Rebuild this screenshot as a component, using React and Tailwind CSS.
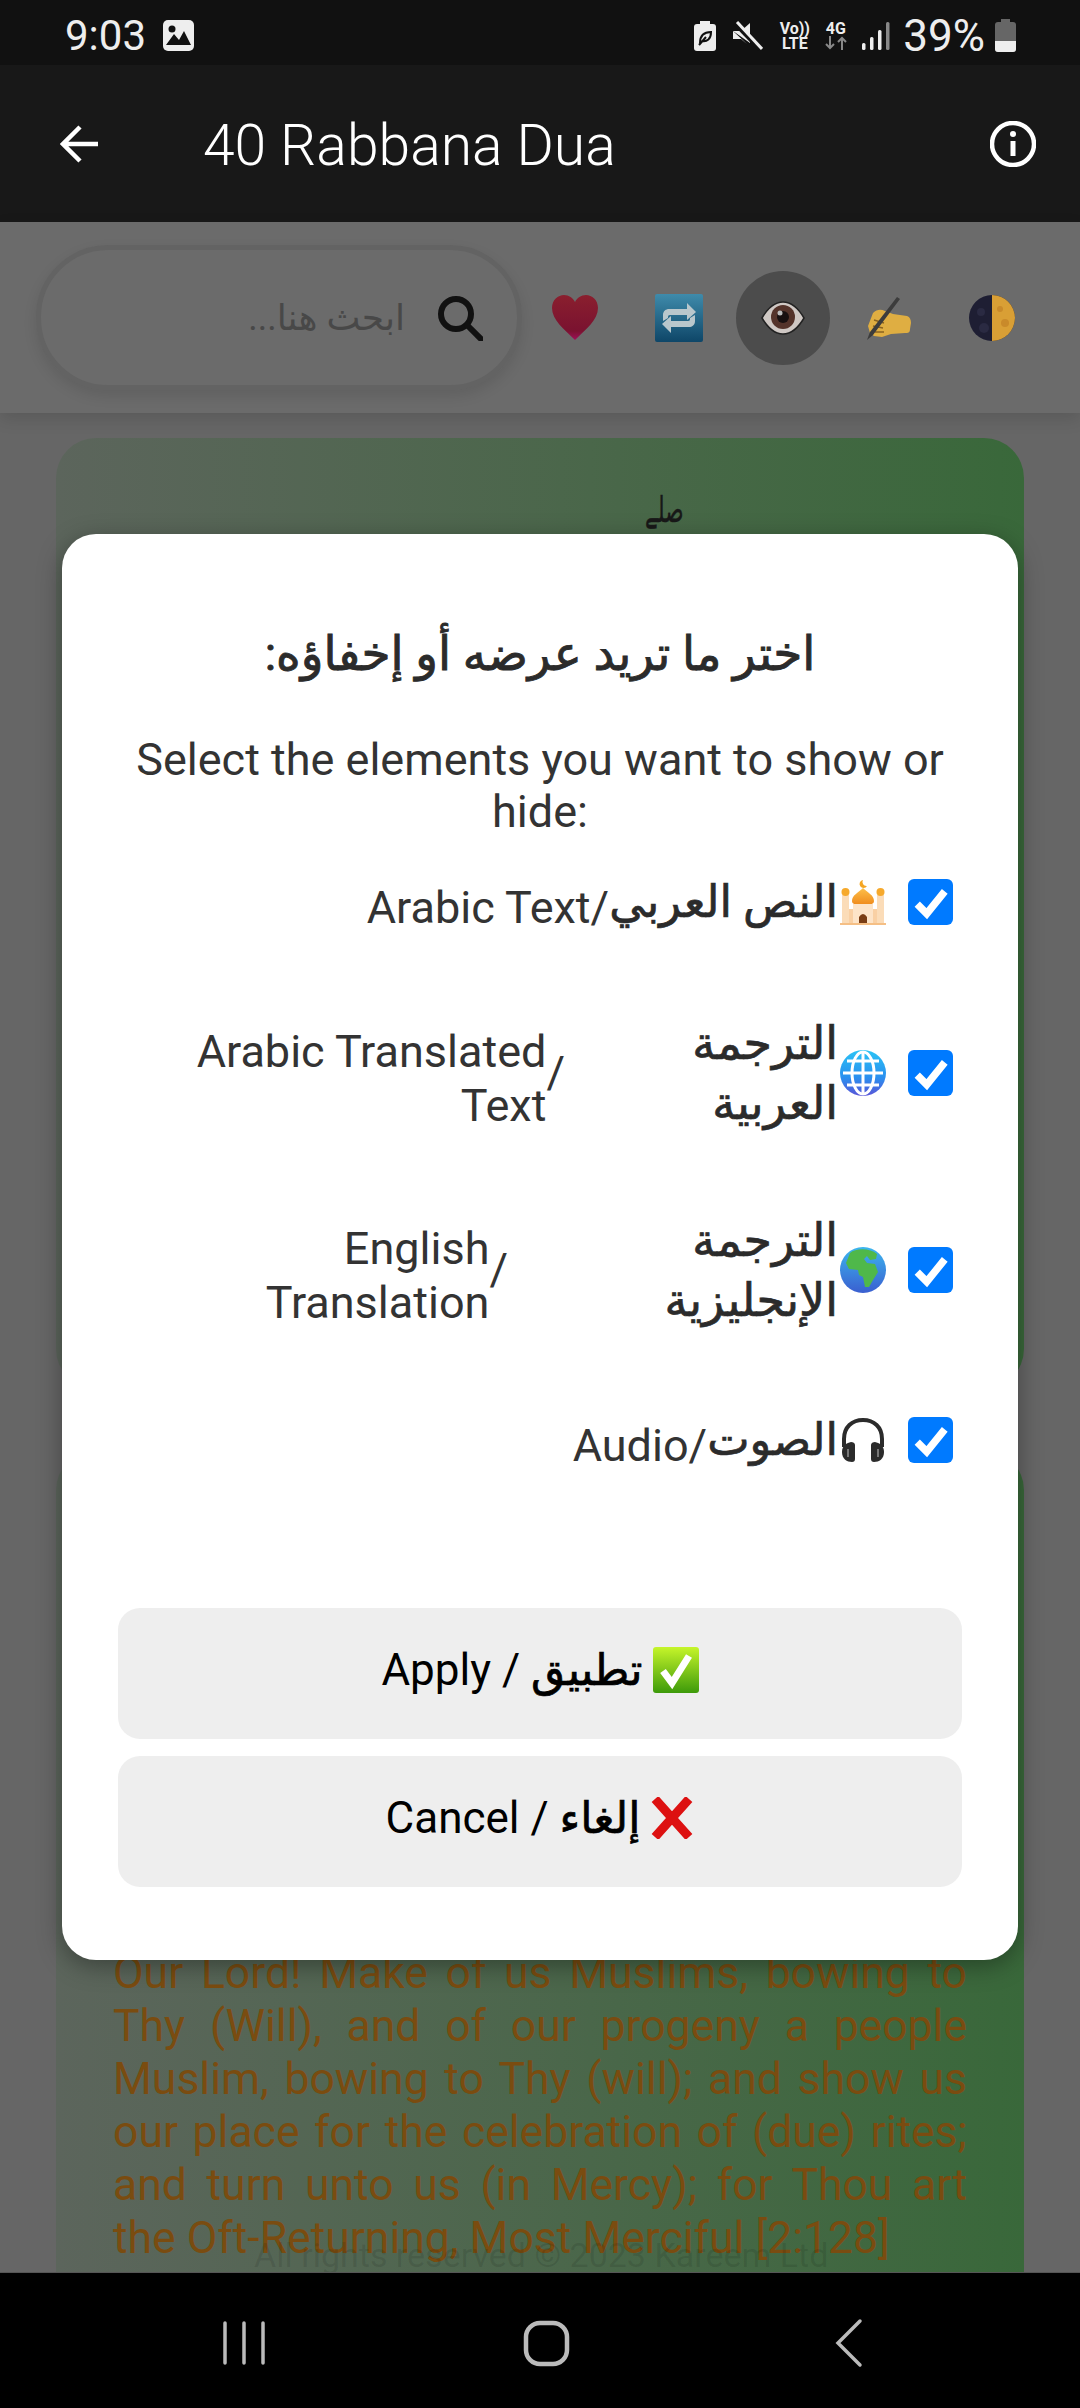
import React from "react";

const latin = "font-['Roboto',sans-serif]";
const arFont = "font-['Roboto','DejaVu_Sans',sans-serif]";
const arMedium = arFont + " [-webkit-text-stroke:0.7px_#2b2b2b]";

function Check() {
  return (
    <div className="w-[45px] h-[46px] rounded-[6px] bg-[#007aff] flex items-center justify-center shrink-0">
      <svg width="36" height="36" viewBox="0 0 34 34"><path d="M4 19 L13 28 L30 7" fill="none" stroke="#fff" strokeWidth="7" /></svg>
    </div>
  );
}

function Mosque() {
  return (
    <svg width="46" height="46" viewBox="0 0 46 46" className="shrink-0">
      <defs>
        <linearGradient id="dome" x1="0" y1="0" x2="0" y2="1"><stop offset="0" stopColor="#fdc04a" /><stop offset="1" stopColor="#ef8a1c" /></linearGradient>
      </defs>
      <path d="M23 1 a4 4 0 1 0 4 6 a4 4 0 0 1 -4 -6z" fill="#f5a623" />
      <path d="M23 9 C18 14 12 16 12 22 C12 25 15 26 23 26 C31 26 34 25 34 22 C34 16 28 14 23 9z" fill="url(#dome)" />
      <rect x="2" y="16" width="7" height="29" fill="#fbdcb8" />
      <rect x="37" y="16" width="7" height="29" fill="#fbdcb8" />
      <circle cx="5.5" cy="13" r="4" fill="#f6a92c" />
      <circle cx="40.5" cy="13" r="4" fill="#f6a92c" />
      <rect x="9" y="30" width="28" height="15" fill="#f9d0a4" />
      <rect x="13" y="25" width="20" height="20" fill="#fde4c8" />
      <path d="M19 45 V38 Q23 32 27 38 V45z" fill="#7a3d14" />
      <rect x="0" y="44" width="46" height="2" fill="#f5bf85" />
    </svg>
  );
}

function WebGlobe() {
  return (
    <svg width="46" height="46" viewBox="0 0 46 46" className="shrink-0">
      <defs>
        <linearGradient id="web" x1="0" y1="0" x2="0" y2="1"><stop offset="0" stopColor="#2bc4f5" /><stop offset="0.6" stopColor="#2a8fef" /><stop offset="1" stopColor="#5a55d8" /></linearGradient>
      </defs>
      <circle cx="23" cy="23" r="23" fill="url(#web)" />
      <g fill="none" stroke="#fff" strokeWidth="3">
        <ellipse cx="23" cy="23" rx="11" ry="21" />
        <path d="M23 2 V44 M3 23 H43 M7 11 H39 M7 35 H39" />
      </g>
    </svg>
  );
}

function EarthGlobe() {
  return (
    <svg width="46" height="46" viewBox="0 0 46 46" className="shrink-0">
      <defs>
        <linearGradient id="sea" x1="0" y1="0" x2="0" y2="1"><stop offset="0" stopColor="#3cb6ef" /><stop offset="1" stopColor="#3a5fd0" /></linearGradient>
      </defs>
      <circle cx="23" cy="23" r="23" fill="url(#sea)" />
      <path d="M10 6 C16 1 30 1 37 7 L36 12 L30 13 L27 9 L24 12 L27 16 L35 17 L38 25 L33 33 L29 40 L25 40 L23 30 L19 28 L18 23 L9 22 L6 16z" fill="#4fb84a" />
    </svg>
  );
}

function Headphones() {
  return (
    <svg width="46" height="46" viewBox="0 0 46 46" className="shrink-0">
      <path d="M4 30 V22 C4 10 12 3 23 3 C34 3 42 10 42 22 V30" fill="none" stroke="#2b2b2b" strokeWidth="4" />
      <path d="M11 25 C7 26 2 28 2 35 C2 42 7 45 12 45 C14 45 15 44 15 42 V28 C15 26 13 25 11 25z" fill="#2b2b2b" />
      <path d="M35 25 C39 26 44 28 44 35 C44 42 39 45 34 45 C32 45 31 44 31 42 V28 C31 26 33 25 35 25z" fill="#2b2b2b" />
      <path d="M8 32 V40 M38 32 V40" stroke="#777" strokeWidth="2" />
    </svg>
  );
}

function Row({ className, emoji, children }) {
  return (
    <div className={"flex items-center justify-end pr-[9px] " + className}>
      {children}
      <div className="ml-[2px] w-[46px] flex items-center justify-center shrink-0">{emoji}</div>
      <div className="ml-[22px]"><Check /></div>
    </div>
  );
}

function Modal() {
  return (
    <div className="absolute left-[62px] top-[534px] w-[956px] h-[1426px] bg-white rounded-[34px] shadow-[0_6px_24px_rgba(0,0,0,0.35)] px-[56px] pt-[90px] flex flex-col">
      <div dir="rtl" className={arFont + " [-webkit-text-stroke:0.9px_#2b2b2b] text-center text-[#2b2b2b] text-[47px] leading-[60px] h-[60px]"}>اختر ما تريد عرضه أو إخفاؤه:</div>
      <div className={latin + " mt-[50px] text-center text-[#333] text-[45px] leading-[52px] mx-[-8px]"}>Select the elements you want to show or hide:</div>
      <Row className="mt-[34px] h-[60px]" emoji={<Mosque />}>
        <span className={latin + " text-[45px] text-[#333] leading-[60px] mt-[12px]"}>Arabic Text/</span>
        <span dir="rtl" className={arMedium + " text-[45px] text-[#2b2b2b] leading-[60px]"}>النص العربي</span>
      </Row>
      <Row className="mt-[81px] h-[120px]" emoji={<WebGlobe />}>
        <span className={latin + " w-[360px] text-right text-[45px] text-[#333] leading-[54px] mt-[12px]"}>Arabic Translated Text</span>
        <span className={latin + " text-[45px] text-[#333] leading-[54px]"}>/</span>
        <span dir="rtl" className={arMedium + " w-[273px] text-right text-[46px] text-[#2b2b2b] leading-[60px]"}>الترجمة<br />العربية</span>
      </Row>
      <Row className="mt-[77px] h-[120px]" emoji={<EarthGlobe />}>
        <span className={latin + " w-[240px] text-right text-[45px] text-[#333] leading-[54px] mt-[12px]"}>English Translation</span>
        <span className={latin + " text-[45px] text-[#333] leading-[54px]"}>/</span>
        <span dir="rtl" className={arMedium + " w-[330px] text-right text-[46px] text-[#2b2b2b] leading-[60px]"}>الترجمة<br />الإنجليزية</span>
      </Row>
      <Row className="mt-[80px] h-[60px]" emoji={<Headphones />}>
        <span className={latin + " text-[45px] text-[#333] leading-[60px] mt-[12px]"}>Audio/</span>
        <span dir="rtl" className={arMedium + " text-[45px] text-[#2b2b2b] leading-[60px]"}>الصوت</span>
      </Row>
      <Btn className="mt-[138px]" icon={
        <svg width="46" height="46" viewBox="0 0 46 46">
          <defs><linearGradient id="gr" x1="0" y1="0" x2="0" y2="1"><stop offset="0" stopColor="#c6f52a" /><stop offset="1" stopColor="#3d9a0a" /></linearGradient></defs>
          <rect width="46" height="46" rx="3" fill="url(#gr)" />
          <path d="M10 24 L19 36 L36 9" fill="none" stroke="#fff" strokeWidth="7" />
        </svg>
      } label="Apply / " ar="تطبيق" />
      <Btn className="mt-[17px]" icon={
        <svg width="44" height="42" viewBox="0 0 44 42"><path d="M5 2 L22 21 L39 2 M5 40 L22 21 L39 40" fill="none" stroke="#dd1111" strokeWidth="9" /></svg>
      } label="Cancel / " ar="إلغاء" />
    </div>
  );
}

function Btn({ className, icon, label, ar }) {
  return (
    <div className={"h-[131px] rounded-[22px] bg-[#eeeeee] flex items-center justify-center gap-[10px] text-black pb-[7px] " + className}>
      <span className={arFont + " text-[44px] whitespace-pre"}>{label}<span className="text-[44px] [-webkit-text-stroke:0.7px_#000]">{ar}</span></span>
      {icon}
    </div>
  );
}

function StatusBar() {
  return (
    <div className="h-[65px] bg-[#111111] flex items-center pl-[65px] pr-[64px] pt-[6px] text-[#eeeeee] shrink-0">
      <span className={latin + " text-[42px] leading-none"}>9:03</span>
      <svg width="31" height="31" viewBox="0 0 31 31" className="ml-[17px]">
        <rect width="31" height="31" rx="5" fill="#eee" />
        <circle cx="9" cy="9" r="3.5" fill="#111" />
        <path d="M3 25 L11 14 L16 20 L21 11 L28 25z" fill="#111" />
      </svg>
      <div className="ml-auto flex items-center">
        <svg width="22" height="30" viewBox="0 0 22 30">
          <rect y="3" width="22" height="27" rx="3" fill="#eee" /><rect x="6" width="10" height="4" fill="#eee" />
          <path d="M6 22 C6 13 11 11 17 11 C17 18 13 21 8 20 M5 24 L12 16" fill="none" stroke="#111" strokeWidth="2" />
        </svg>
        <svg width="30" height="30" viewBox="0 0 30 30" className="ml-[17px]">
          <path d="M0 10 H8 L17 2 V22z" fill="#eee" /><path d="M0 10 V18 H8 L14 23z" fill="#eee" />
          <path d="M2 2 L29 30" stroke="#111" strokeWidth="5" /><path d="M4 1 L29 28" stroke="#eee" strokeWidth="3" />
        </svg>
        <div className={latin + " ml-[16px] w-[31px] flex flex-col items-center font-bold text-[16px] leading-[15px]"}>
          <span>Vo))</span><span>LTE</span>
        </div>
        <div className={latin + " ml-[13px] w-[25px] flex flex-col items-center font-bold text-[16px] leading-[15px]"}>
          <span>4G</span>
          <svg width="24" height="14" viewBox="0 0 24 14">
            <path d="M6 0 V12 M2 8 L6 12 L10 8" fill="none" stroke="#888" strokeWidth="2" />
            <path d="M18 14 V2 M14 6 L18 2 L22 6" fill="none" stroke="#888" strokeWidth="2" />
          </svg>
        </div>
        <svg width="28" height="30" viewBox="0 0 28 30" className="ml-[14px]">
          <rect x="0" y="22" width="3.5" height="7" rx="1.5" fill="#eee" />
          <rect x="8" y="16" width="3.5" height="13" rx="1.5" fill="#eee" />
          <rect x="16" y="9" width="3.5" height="20" rx="1.5" fill="#eee" />
          <rect x="24" y="1" width="3.5" height="28" rx="1.5" fill="#888" />
        </svg>
        <span className={latin + " ml-[13px] text-[44px] leading-none"}>39%</span>
        <svg width="21" height="33" viewBox="0 0 21 33" className="ml-[10px]">
          <rect x="6" width="9" height="4" fill="#666" />
          <rect y="3" width="21" height="30" rx="3" fill="#666" />
          <path d="M0 22 H21 V30 a3 3 0 0 1 -3 3 H3 a3 3 0 0 1 -3 -3z" fill="#eee" />
        </svg>
      </div>
    </div>
  );
}

function AppBar() {
  return (
    <div className="h-[157px] bg-[#181818] flex items-center pl-[60px] pr-[44px] shrink-0">
      <svg width="40" height="40" viewBox="0 0 40 40">
        <path d="M38 20 H4 M20 3 L3 20 L20 37" fill="none" stroke="#fff" strokeWidth="4.5" />
      </svg>
      <span className={latin + " ml-[103px] text-white text-[57px] font-light leading-none pt-[3px]"}>40 Rabbana Dua</span>
      <svg width="46" height="46" viewBox="0 0 46 46" className="ml-auto">
        <circle cx="23" cy="23" r="21" fill="none" stroke="#fff" strokeWidth="4.5" />
        <path d="M23 20 V35" stroke="#fff" strokeWidth="5" />
        <circle cx="23" cy="13" r="3" fill="#fff" />
      </svg>
    </div>
  );
}

function Toolbar() {
  return (
    <div className="h-[191px] bg-[#6b6b6b] flex items-center pl-[36px] shrink-0 relative shadow-[0_6px_16px_rgba(0,0,0,0.12)]">
      <div className="w-[486px] h-[145px] rounded-[72px] border-[5px] border-[#636363] shadow-[0_6px_14px_rgba(0,0,0,0.1)] flex items-center justify-end pr-[34px]">
        <span dir="rtl" className={arFont + " text-[36px] text-[#484848] mr-[32px]"}>ابحث هنا...</span>
        <svg width="46" height="46" viewBox="0 0 46 46">
          <circle cx="19" cy="19" r="15" fill="none" stroke="#111" strokeWidth="6" />
          <path d="M30 30 L44 44" stroke="#111" strokeWidth="6" strokeLinecap="round" />
        </svg>
      </div>
      <svg width="46" height="46" viewBox="0 0 46 46" className="ml-[30px]">
        <defs><linearGradient id="h" x1="0" y1="0" x2="0" y2="1"><stop offset="0" stopColor="#8a1f2e" /><stop offset="0.8" stopColor="#7a1230" /><stop offset="1" stopColor="#a0105a" /></linearGradient></defs>
        <path d="M23 45 C12 34 0 25 0 13 C0 5 6 0 12 0 C17 0 21 3 23 7 C25 3 29 0 34 0 C40 0 46 5 46 13 C46 25 34 34 23 45z" fill="url(#h)" />
      </svg>
      <svg width="48" height="48" viewBox="0 0 48 48" className="ml-[57px]">
        <defs><linearGradient id="r" x1="0" y1="0" x2="0" y2="1"><stop offset="0" stopColor="#3f8bab" /><stop offset="1" stopColor="#0e4668" /></linearGradient></defs>
        <rect width="48" height="48" rx="2" fill="url(#r)" />
        <path d="M8 27 V21 C8 17 11 15 14 15 H32 V9 L41 18 L32 26 V21 H15 C13 21 13 22 13 24z M40 21 V27 C40 31 37 33 34 33 H16 V39 L7 30 L16 22 V27 H33 C35 27 35 26 35 24z" fill="#b9c7cc" />
      </svg>
      <div className="ml-[33px] w-[94px] h-[94px] rounded-full bg-[#4c4c4c] flex items-center justify-center">
        <svg width="44" height="34" viewBox="0 0 44 34">
          <path d="M1 17 C8 5 15 1 22 1 C29 1 36 5 43 17 C36 29 29 33 22 33 C15 33 8 29 1 17z" fill="#cfc8c4" stroke="#222" strokeWidth="1.5" />
          <circle cx="22" cy="16" r="12" fill="#54332a" />
          <circle cx="22" cy="16" r="6" fill="#181010" />
          <circle cx="19" cy="12" r="2.5" fill="#bbb" />
        </svg>
      </div>
      <svg width="46" height="46" viewBox="0 0 46 46" className="ml-[35px]">
        <path d="M8 18 C12 14 16 14 20 16 L28 19 L42 21 C45 22 46 25 46 28 L45 34 C45 38 43 38 40 38 L26 39 L17 42 L9 41 L5 38 L3 31z" fill="#dfae42" />
        <path d="M9 25 L19 28 M8 31 L18 33 M10 37 L19 37" stroke="#8a6420" strokeWidth="1.5" fill="none" />
        <path d="M2 45 L5 37 L32 2 L35 4 L8 40z" fill="#3c3c3c" />
      </svg>
      <svg width="46" height="46" viewBox="0 0 46 46" className="ml-[58px]">
        <circle cx="23" cy="23" r="23" fill="#1e1e33" />
        <path d="M23 0 A23 23 0 0 1 23 46z" fill="#d99f35" />
        <circle cx="31" cy="14" r="3" fill="#c98a2a" /><circle cx="36" cy="28" r="4" fill="#c98a2a" />
        <circle cx="12" cy="17" r="4" fill="#2a2a42" /><circle cx="15" cy="33" r="5" fill="#2a2a42" />
      </svg>
    </div>
  );
}

function Main() {
  const gradient = "bg-linear-to-r from-[#5c655c] to-[#39683a]";
  return (
    <div className="flex-1 bg-[#666666] px-[56px] pt-[25px] flex flex-col overflow-hidden">
      <div className={gradient + " h-[951px] rounded-[40px] shrink-0 flex justify-end pr-[341px] pt-[50px]"}>
        <span dir="rtl" className={arFont + " inline-block origin-right scale-x-60 text-[#181818] text-[36px] leading-[44px] h-[44px] [-webkit-text-stroke:0.4px_#181818]"}>صلے</span>
      </div>
      <div className={gradient + " mt-[61px] rounded-t-[40px] flex-1 px-[57px] pt-[497px] relative"}>
        <p className={latin + " text-justify text-[#7a4c10] text-[44.5px] leading-[53px]"}>
          Our Lord! Make of us Muslims, bowing to Thy (Will), and of our progeny a people Muslim, bowing to Thy (will); and show us our place for the celebration of (due) rites; and turn unto us (in Mercy); for Thou art the Oft-Returning, Most Merciful [2:128]
        </p>
        <span className={latin + " absolute left-[198px] bottom-0 text-black/10 text-[34px] leading-[34px]"}>All rights reserved © 2023 Kareem Ltd</span>
      </div>
    </div>
  );
}

function NavBar() {
  return (
    <div className="h-[136px] bg-black border-t border-[#555] flex items-center justify-center shrink-0">
      <svg width="1080" height="135" viewBox="0 0 1080 135">
        <path d="M225 50 V90 M244 50 V90 M263 50 V90" stroke="#bbb" strokeWidth="3.5" strokeLinecap="round" />
        <rect x="526" y="50" width="41" height="41" rx="14" fill="none" stroke="#bbb" strokeWidth="4.5" />
        <path d="M860 48 L838 70 L860 92" fill="none" stroke="#bbb" strokeWidth="3.5" strokeLinecap="round" />
      </svg>
    </div>
  );
}

export default function App() {
  return (
    <div className="relative w-[1080px] h-[2408px] overflow-hidden flex flex-col bg-[#666666]">
      <StatusBar />
      <AppBar />
      <Toolbar />
      <Main />
      <NavBar />
      <Modal />
    </div>
  );
}
